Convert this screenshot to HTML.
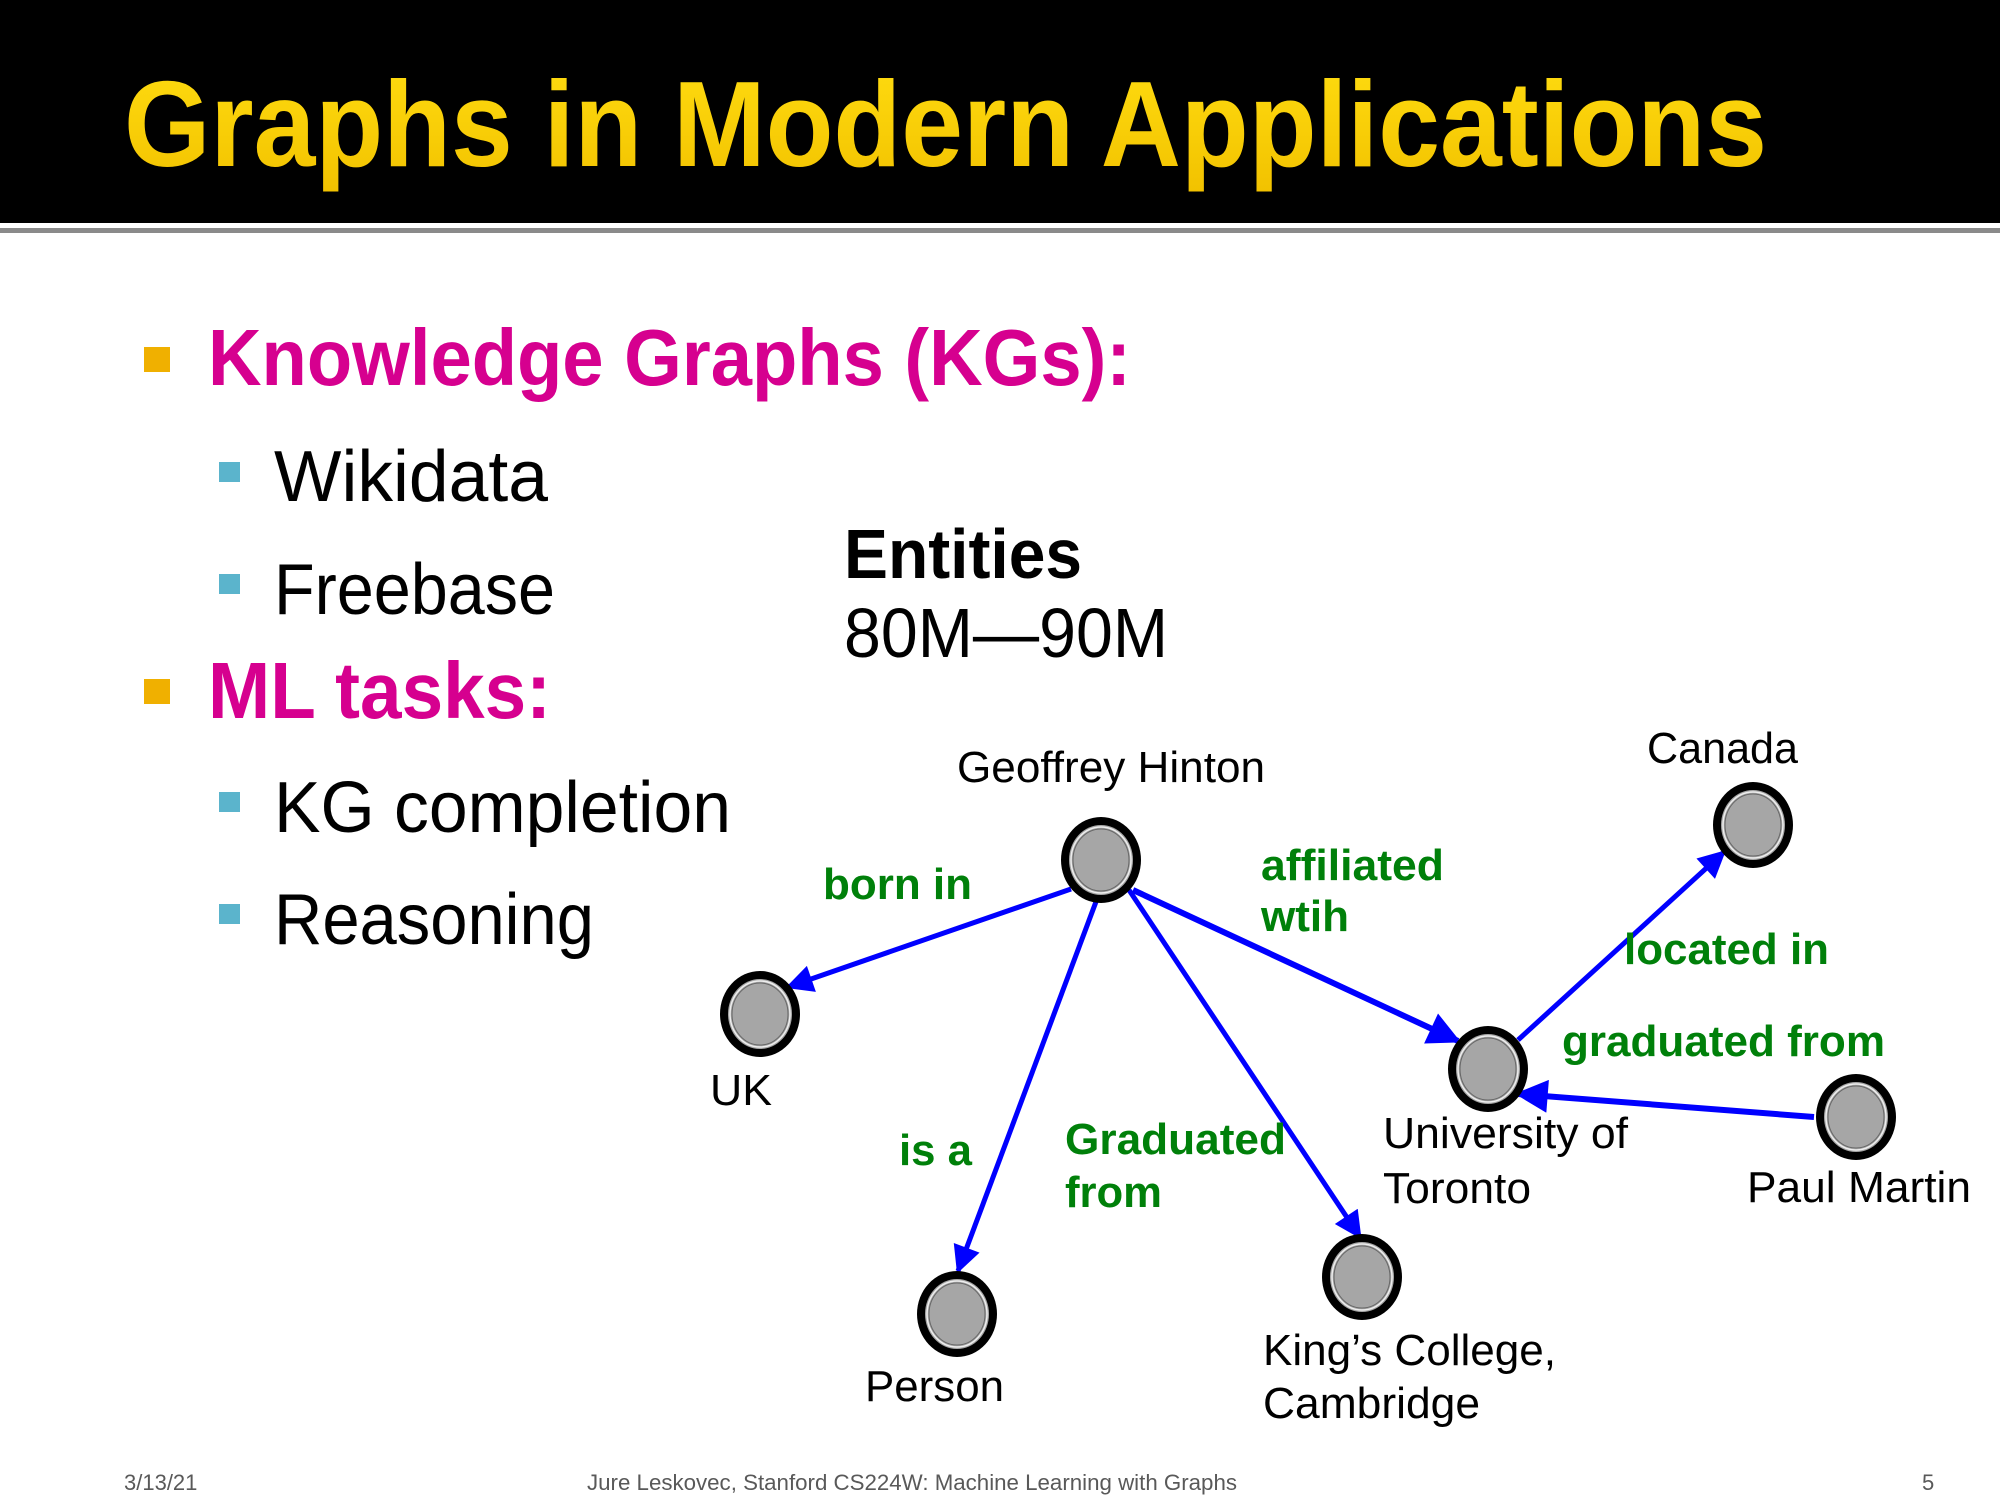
<!DOCTYPE html>
<html><head><meta charset="utf-8"><style>
html,body{margin:0;padding:0;background:#fff;}
svg{display:block}
</style></head><body>
<svg width="2000" height="1500" viewBox="0 0 2000 1500" xmlns="http://www.w3.org/2000/svg">
<defs>
<marker id="ar" viewBox="0 0 10 10" refX="9" refY="5" markerWidth="6" markerHeight="5.5" orient="auto" markerUnits="strokeWidth">
<path d="M0,0 L10,5 L0,10 z" fill="#0000ff"/>
</marker>
<linearGradient id="yg" x1="0" y1="0" x2="0" y2="1">
<stop offset="0" stop-color="#ffdc10"/><stop offset="1" stop-color="#f2c200"/>
</linearGradient>
<g id="node">
<ellipse cx="0" cy="0" rx="40" ry="43" fill="#000"/>
<ellipse cx="0" cy="0" rx="32" ry="35" fill="#a6a6a6"/>
<ellipse cx="0" cy="0" rx="30" ry="33" fill="none" stroke="#eee" stroke-width="1.5"/>
<ellipse cx="0" cy="0" rx="28" ry="31" fill="#a6a6a6" stroke="#666" stroke-width="1"/>
</g>
</defs>
<rect x="0" y="0" width="2000" height="223" fill="#000"/>
<rect x="0" y="228" width="2000" height="5" fill="#8a8a8a"/>
<text x="124" y="166" font-family="Liberation Sans, sans-serif" font-weight="bold" font-size="122" fill="url(#yg)" textLength="1643" lengthAdjust="spacingAndGlyphs">Graphs in Modern Applications</text>

<g font-family="Liberation Sans, sans-serif">
<rect x="144" y="347" width="26" height="25" fill="#f0b000"/>
<text x="208" y="385" font-weight="bold" font-size="80" fill="#d6008f" textLength="923" lengthAdjust="spacingAndGlyphs">Knowledge Graphs (KGs):</text>
<rect x="219" y="462" width="21" height="20" fill="#5bb4cc"/>
<text x="274" y="501" font-size="72" fill="#000" textLength="274" lengthAdjust="spacingAndGlyphs">Wikidata</text>
<rect x="219" y="574" width="21" height="20" fill="#5bb4cc"/>
<text x="274" y="614" font-size="72" fill="#000" textLength="281" lengthAdjust="spacingAndGlyphs">Freebase</text>
<rect x="144" y="679" width="26" height="25" fill="#f0b000"/>
<text x="208" y="718" font-weight="bold" font-size="80" fill="#d6008f" textLength="343" lengthAdjust="spacingAndGlyphs">ML tasks:</text>
<rect x="219" y="792" width="21" height="20" fill="#5bb4cc"/>
<text x="274" y="832" font-size="72" fill="#000" textLength="457" lengthAdjust="spacingAndGlyphs">KG completion</text>
<rect x="219" y="904" width="21" height="20" fill="#5bb4cc"/>
<text x="274" y="944" font-size="72" fill="#000" textLength="320" lengthAdjust="spacingAndGlyphs">Reasoning</text>

<text x="844" y="578" font-weight="bold" font-size="70" fill="#000" textLength="238" lengthAdjust="spacingAndGlyphs">Entities</text>
<text x="844" y="657" font-size="70" fill="#000" textLength="324" lengthAdjust="spacingAndGlyphs">80M—90M</text>
</g>

<g stroke="#0000ff" stroke-width="5" fill="none" marker-end="url(#ar)">
<line x1="1071" y1="889" x2="788" y2="987"/>
<line x1="1097" y1="899" x2="958" y2="1271"/>
<line x1="1129" y1="890" x2="1360" y2="1237"/>
<line x1="1133" y1="890" x2="1458" y2="1041" stroke-width="6"/>
<line x1="1518" y1="1040" x2="1724" y2="852"/>
<line x1="1814" y1="1117" x2="1518" y2="1094" stroke-width="6"/>
</g>

<use href="#node" x="1101" y="860"/>
<use href="#node" x="760" y="1014"/>
<use href="#node" x="957" y="1314"/>
<use href="#node" x="1362" y="1277"/>
<use href="#node" x="1488" y="1069"/>
<use href="#node" x="1753" y="825"/>
<use href="#node" x="1856" y="1117"/>

<g font-family="Liberation Sans, Arial, sans-serif" font-size="44" fill="#000">
<text x="957" y="782" textLength="308" lengthAdjust="spacingAndGlyphs">Geoffrey Hinton</text>
<text x="1647" y="763" textLength="151" lengthAdjust="spacingAndGlyphs">Canada</text>
<text x="710" y="1105" textLength="62" lengthAdjust="spacingAndGlyphs">UK</text>
<text x="865" y="1401" textLength="139" lengthAdjust="spacingAndGlyphs">Person</text>
<text x="1263" y="1365" textLength="293" lengthAdjust="spacingAndGlyphs">King’s College,</text>
<text x="1263" y="1418" textLength="217" lengthAdjust="spacingAndGlyphs">Cambridge</text>
<text x="1383" y="1148" textLength="245" lengthAdjust="spacingAndGlyphs">University of</text>
<text x="1383" y="1203" textLength="148" lengthAdjust="spacingAndGlyphs">Toronto</text>
<text x="1747" y="1202" textLength="224" lengthAdjust="spacingAndGlyphs">Paul Martin</text>
</g>
<g font-family="Liberation Sans, Arial, sans-serif" font-size="44" font-weight="bold" fill="#00800a">
<text x="823" y="899" textLength="149" lengthAdjust="spacingAndGlyphs">born in</text>
<text x="1261" y="880" textLength="183" lengthAdjust="spacingAndGlyphs">affiliated</text>
<text x="1261" y="931" textLength="88" lengthAdjust="spacingAndGlyphs">wtih</text>
<text x="1624" y="964" textLength="205" lengthAdjust="spacingAndGlyphs">located in</text>
<text x="1562" y="1056" textLength="323" lengthAdjust="spacingAndGlyphs">graduated from</text>
<text x="899" y="1165" textLength="73" lengthAdjust="spacingAndGlyphs">is a</text>
<text x="1065" y="1154" textLength="221" lengthAdjust="spacingAndGlyphs">Graduated</text>
<text x="1065" y="1207" textLength="97" lengthAdjust="spacingAndGlyphs">from</text>
</g>

<g font-family="Liberation Sans, sans-serif" font-size="22" fill="#595959">
<text x="124" y="1490">3/13/21</text>
<text x="587" y="1490" textLength="650" lengthAdjust="spacingAndGlyphs">Jure Leskovec, Stanford CS224W: Machine Learning with Graphs</text>
<text x="1922" y="1490">5</text>
</g>
</svg>
</body></html>
